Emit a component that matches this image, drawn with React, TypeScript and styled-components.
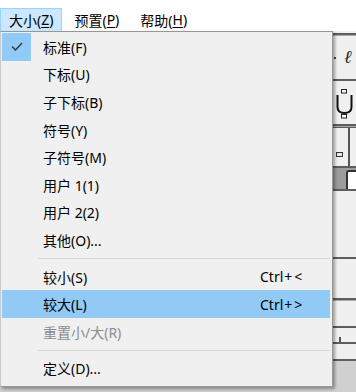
import React from "react";
import styled, { createGlobalStyle } from "styled-components";

interface menuEntry {
  label?: string,
  shortcut?: string,
  checked?: boolean,
  active?: boolean,
  disabled?: boolean,
  separator?: boolean,
}

const entries: menuEntry[] = [
  { label: "标准(F)", checked: true },
  { label: "下标(U)" },
  { label: "子下标(B)" },
  { label: "符号(Y)" },
  { label: "子符号(M)" },
  { label: "用户 1(1)" },
  { label: "用户 2(2)" },
  { label: "其他(O)..." },
  { separator: true },
  { label: "较小(S)", shortcut: "<" },
  { label: "较大(L)", shortcut: ">", active: true },
  { label: "重置小/大(R)", disabled: true },
  { separator: true },
  { label: "定义(D)..." },
];

// 뒤쪽 창의 가로 띠들 (y 31 부터)
const bands: { h: number, kind: string }[] = [
  { h: 2, kind: "light" },
  { h: 2, kind: "dark" },
  { h: 1, kind: "mid" },
  { h: 43, kind: "ell" },
  { h: 2, kind: "dark" },
  { h: 43, kind: "template" },
  { h: 2, kind: "dark" },
  { h: 1, kind: "mid" },
  { h: 1, kind: "dark" },
  { h: 38, kind: "split" },
  { h: 2, kind: "dark" },
  { h: 21, kind: "tab" },
  { h: 2, kind: "dark" },
  { h: 66, kind: "plain" },
  { h: 2, kind: "dark" },
  { h: 39, kind: "plain" },
  { h: 2, kind: "dark" },
  { h: 1, kind: "mid" },
  { h: 25, kind: "plain" },
  { h: 2, kind: "dark" },
  { h: 14, kind: "tick" },
  { h: 2, kind: "dark" },
  { h: 15, kind: "plain" },
  { h: 2, kind: "dark" },
  { h: 31, kind: "bottom" },
];

const CheckIcon = () => (
  <svg width="12" height="9" viewBox="0 0 12 9">
    <polyline points="1,4.5 4.5,8 11,1" fill="none" stroke="#333" strokeWidth="1.3" />
  </svg>
);

const TemplateIcon = () => (
  <svg width="18" height="30" viewBox="0 0 18 30">
    <rect x="5.5" y="0.5" width="5" height="3.5" fill="#fff" stroke="#222" strokeWidth="1" />
    <path d="M1.5 6 V18 Q1.5 24 8.5 24 Q15.5 24 15.5 18 V6" fill="none" stroke="#111" strokeWidth="2" />
    <rect x="5.5" y="25.5" width="5" height="3.5" fill="#fff" stroke="#222" strokeWidth="1" />
  </svg>
);

const bandContent = (kind: string) => {
  if (kind === "ell") {
    return (
      <>
        <Dot />
        <Ell>ℓ</Ell>
      </>
    );
  }
  if (kind === "template") {
    return <TemplateSlot><TemplateIcon /></TemplateSlot>;
  }
  if (kind === "split") {
    return (
      <>
        <SmallBox />
        <SplitCell />
      </>
    );
  }
  if (kind === "tab") {
    return <TabBox />;
  }
  if (kind === "tick") {
    return <Tick />;
  }
  return null;
};

const App = () => {
  return (
    <Screen>
      <GlobalStyle />
      <MenuBar>
        <BarItem className="open">大小(<u>Z</u>)</BarItem>
        <BarItem>预置(<u>P</u>)</BarItem>
        <BarItem>帮助(<u>H</u>)</BarItem>
      </MenuBar>
      <Backdrop>
        {bands.map((b, i) => (
          <Band key={i} kind={b.kind} style={{ height: b.h }}>
            {bandContent(b.kind)}
          </Band>
        ))}
      </Backdrop>
      <Dropdown>
        {entries.map((e, i) => {
          if (e.separator) {
            return <Separator key={i} />;
          }
          return (
            <Item key={i} $active={e.active} $disabled={e.disabled}>
              <CheckCell $checked={e.checked}>{e.checked && <CheckIcon />}</CheckCell>
              <Label>{e.label}</Label>
              <Shortcut>
                {e.shortcut && <>Ctrl<Plus>+</Plus>{e.shortcut}</>}
              </Shortcut>
            </Item>
          );
        })}
      </Dropdown>
    </Screen>
  );
};

export default App;

const GlobalStyle = createGlobalStyle`
  html, body {
    margin: 0;
    padding: 0;
    background: #ffffff;
  }
  body {
    font-family: "Noto Sans", "Noto Sans CJK SC", sans-serif;
  }
`

const Screen = styled.div`
  position: relative;
  width: 356px;
  height: 392px;
  overflow: hidden;
  background: #ffffff;
`

const MenuBar = styled.div`
  display: flex;
  align-items: stretch;
  height: 23px;
  padding-top: 8px;
  background: #ffffff;
  font-size: 14px;
  color: #000;
`

const BarItem = styled.div`
  display: flex;
  align-items: center;
  padding: 0 8px 1px 8px;
  margin-right: 3px;
  box-sizing: border-box;
  border: 1px solid transparent;
  border-bottom: none;
  white-space: nowrap;
  background-color: ${props => props.className === "open" ? "#cce8ff" : "transparent"};
  border-color: ${props => props.className === "open" ? "#99d1ff" : "transparent"};

  u {
    text-decoration-thickness: 1px;
    text-underline-offset: 2px;
  }
`

const Backdrop = styled.div`
  display: flex;
  flex-direction: column;
`

const Band = styled.div<{ kind: string }>`
  display: flex;
  align-items: center;
  justify-content: flex-end;
  background: ${props =>
    props.kind === "dark" ? "#5e5e5e"
      : props.kind === "mid" ? "#a9a9a9"
      : props.kind === "bottom" ? "#d0d0d0"
      : props.kind === "tab" ? "#9c9c9c"
      : "#f0f0f0"};
`

const Dot = styled.div`
  width: 2px;
  height: 2px;
  background: #444;
  margin-right: 8px;
`

const Ell = styled.span`
  width: 12px;
  font-family: "Liberation Serif", "DejaVu Serif", serif;
  font-style: italic;
  font-size: 18px;
  color: #222;
`

const TemplateSlot = styled.div`
  display: flex;
  width: 20px;
  padding-top: 2px;
`

const SmallBox = styled.div`
  width: 5px;
  height: 3px;
  border: 1px solid #333;
  background: #e8e8e8;
  margin-right: 5px;
  align-self: flex-end;
  margin-bottom: 9px;
`

const SplitCell = styled.div`
  width: 6px;
  align-self: stretch;
  border-left: 2px solid #555;
`

const TabBox = styled.div`
  width: 8px;
  align-self: stretch;
  margin-top: 2px;
  background: #ffffff;
  border-left: 2px solid #333;
  border-top: 2px solid #333;
  border-top-left-radius: 3px;
`

const Tick = styled.div`
  width: 2px;
  height: 5px;
  align-self: flex-end;
  background: #555;
  margin-right: 15px;
`

const Dropdown = styled.div`
  position: absolute;
  left: 0;
  top: 31px;
  width: 333px;
  box-sizing: border-box;
  padding: 1px 2px 4px 1px;
  background: #f0f0f0;
  border: 1px solid #979797;
  border-left-color: #c8c8c8;
  box-shadow: 2px 2px 3px rgba(0, 0, 0, 0.35);
  font-size: 14px;
`

const Item = styled.div<{ $active?: boolean, $disabled?: boolean }>`
  display: flex;
  align-items: center;
  height: 27.6px;
  background: ${props => props.$active ? "#91c9f7" : "transparent"};
  color: ${props => props.$disabled ? "#8d8d8d" : "#000000"};
  white-space: nowrap;
`

const CheckCell = styled.div<{ $checked?: boolean }>`
  display: flex;
  align-items: center;
  justify-content: center;
  width: 29px;
  height: 28px;
  background: ${props => props.$checked ? "#91c9f7" : "transparent"};
`

const Label = styled.span`
  flex: 1;
  padding-left: 12px;
`

const Shortcut = styled.span`
  width: 70px;
`

const Plus = styled.span`
  margin: 0 2px 0 1px;
`

const Separator = styled.div`
  height: 9px;
  margin-left: 36px;
  display: flex;
  align-items: center;

  &::after {
    content: "";
    flex: 1;
    height: 1px;
    background: #d7d7d7;
  }
`
